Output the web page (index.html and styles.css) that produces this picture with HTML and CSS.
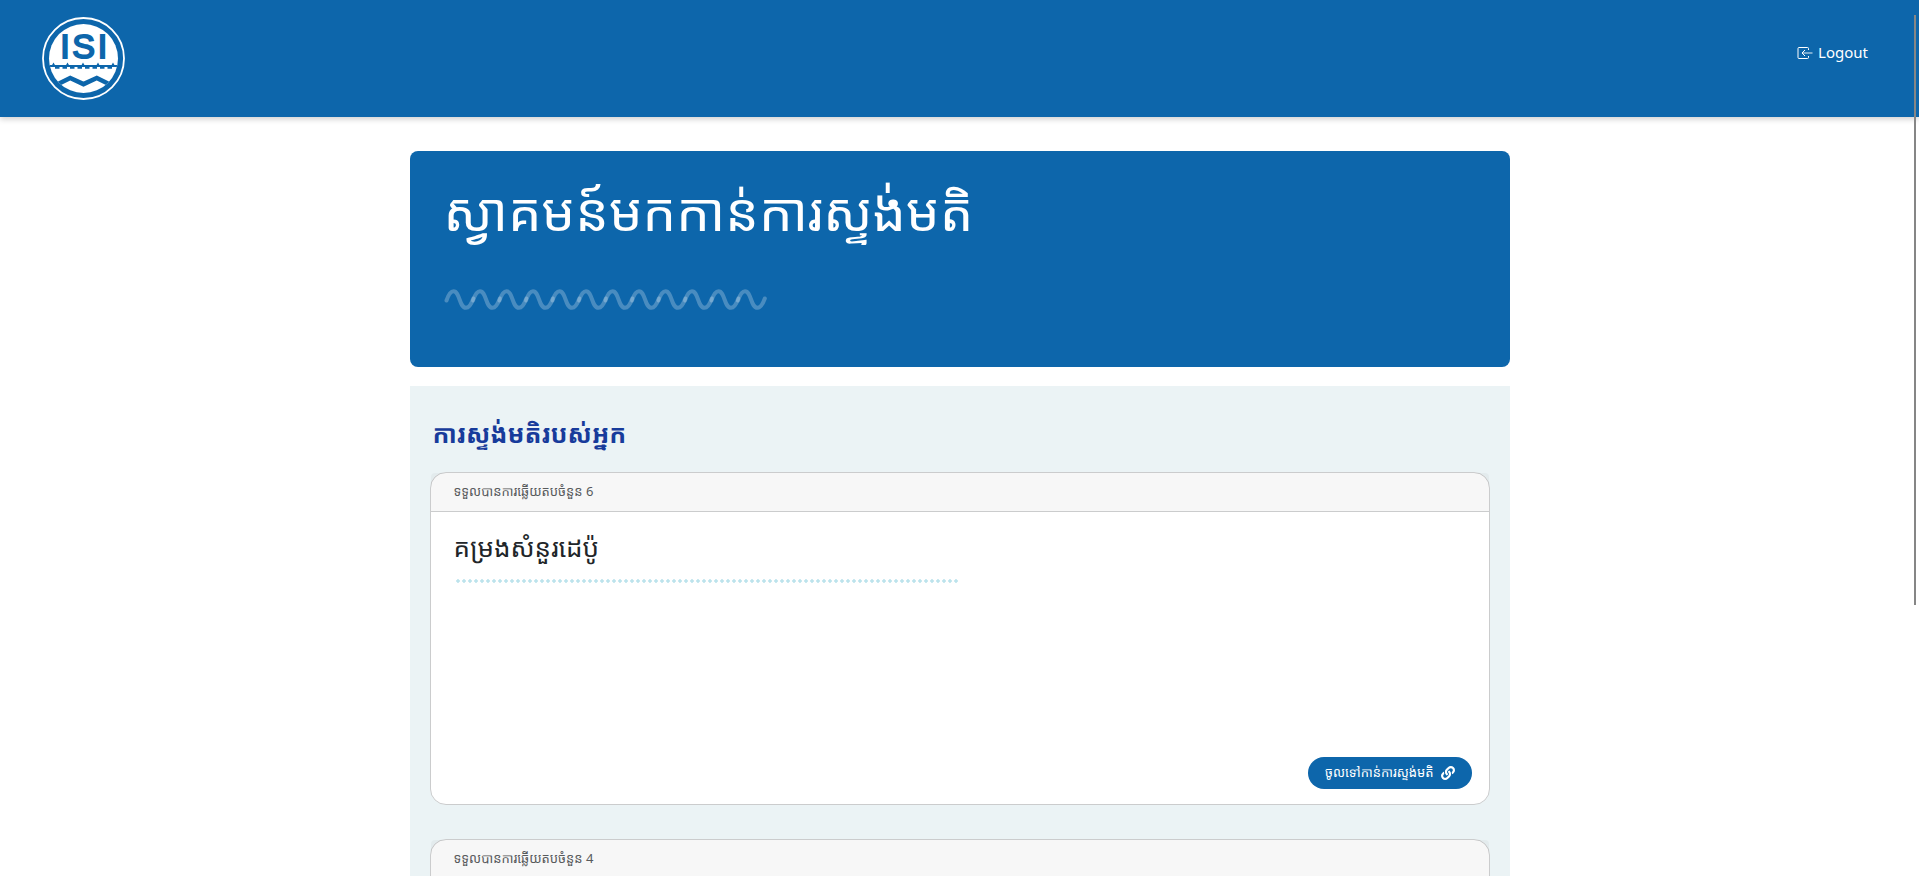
FILE: index.html
```html
<!DOCTYPE html>
<html lang="km">
<head>
<meta charset="utf-8">
<meta name="viewport" content="width=device-width, initial-scale=1">
<title>ISI</title>
<link rel="stylesheet" href="styles.css">
</head>
<body>
<header class="topbar">
  <a class="brand" href="#" aria-label="Home">
    <svg class="logo" viewBox="0 0 83 83" aria-hidden="true">
      <defs><clipPath id="disc"><circle cx="41.500" cy="41.500" r="34.500"/></clipPath></defs>
      <circle cx="41.500" cy="41.500" r="40.500" fill="none" stroke="#fff" stroke-width="1.800"/>
      <circle cx="41.500" cy="41.500" r="34.500" fill="#fff"/>
      <g clip-path="url(#disc)" fill="none" stroke="#0d66ab">
        <path stroke-width="2.200" d="M5 49H78"/>
        <path fill="#0d66ab" stroke="none" d="M9.500 49l2-3.500 2 3.500zM23.500 49l2-3.500 2 3.500zM39 49l2-3.500 2 3.500zM54 49l2-3.500 2 3.500zM69 49l2-3.500 2 3.500z"/>
        <path stroke-width="2.400" stroke-dasharray="4.500 3" d="M13 50.600H72"/>
        <path stroke-width="4.600" d="M9 70.500L28.200 61 41.500 67.200 54.800 61 74 70.500"/>
      </g>
      <g class="logo-text" text-anchor="middle"><text x="23" y="41">I</text><text x="41.500" y="41">S</text><text x="60.500" y="41">I</text></g>
    </svg>
  </a>
  <a class="logout" href="#">
    <svg class="logout-icon" viewBox="0 0 16 14" fill="none" stroke="#fff" aria-hidden="true">
      <path d="M11.500 4V2.500Q11.500 1.500 10.500 1.500H2Q1 1.500 1 2.500V11.500Q1 12.500 2 12.500H10.500Q11.500 12.500 11.500 11.500V10"/>
      <path d="M8 4L5 7l3 3"/><path d="M5.500 7H15.500" stroke-width="1.500" stroke-opacity=".6"/>
    </svg>
    <span>Logout</span>
  </a>
</header>
<main class="page">
  <section class="banner">
    <h1 class="banner-title">ស្វាគមន៍មកកាន់ការស្ទង់មតិ</h1>
    <svg class="wave" viewBox="0 0 324 22" aria-hidden="true">
      <defs><path id="w" d="M2.500 12.500C5 5 7 3.200 9.500 3.200C16 3.200 15 19.800 22 19.800C25 19.800 27 17 29.300 10.500"/></defs>
      <g fill="none" stroke="#fff" stroke-opacity=".25" stroke-width="4" stroke-linecap="round">
        <use href="#w"/><use href="#w" x="26.500"/><use href="#w" x="53"/><use href="#w" x="79.500"/><use href="#w" x="106"/><use href="#w" x="132.500"/><use href="#w" x="159"/><use href="#w" x="185.500"/><use href="#w" x="212"/><use href="#w" x="238.500"/><use href="#w" x="265"/><use href="#w" x="291.500"/>
      </g>
    </svg>
  </section>
  <section class="surveys">
    <h2 class="surveys-title">ការស្ទង់មតិរបស់អ្នក</h2>
    <article class="card">
      <div class="card-head">ទទួលបានការឆ្លើយតបចំនួន 6</div>
      <div class="card-body">
        <h3 class="card-title">គម្រងសំនួរដេប៉ូ</h3>
        <div class="dots"></div>
        <a class="button" href="#"><span>ចូលទៅកាន់ការស្ទង់មតិ</span>
          <svg class="link-icon" viewBox="0 0 512 512" fill="#fff" aria-hidden="true"><path d="M326.612 185.391c59.747 59.809 58.927 155.698.36 214.590-.110.120-.240.250-.360.370l-67.200 67.200c-59.270 59.270-155.699 59.262-214.960 0-59.270-59.260-59.270-155.700 0-214.960l37.106-37.106c9.840-9.840 26.786-3.300 27.294 10.606.648 17.722 3.826 35.527 9.690 52.721 1.986 5.822.567 12.262-3.783 16.612l-13.087 13.087c-28.026 28.026-28.905 73.660-1.155 101.960 28.024 28.579 74.086 28.749 102.325.510l67.200-67.190c28.191-28.191 28.073-73.757 0-101.830-3.701-3.694-7.429-6.564-10.341-8.569a16.037 16.037 0 0 1-6.947-12.606c-.396-10.567 3.348-21.456 11.698-29.806l21.054-21.055c5.521-5.521 14.182-6.199 20.584-1.731a152.482 152.482 0 0 1 20.522 17.197zM467.547 44.449c-59.261-59.262-155.690-59.270-214.960 0l-67.200 67.200c-.120.120-.250.250-.360.370-58.566 58.892-59.387 154.781.360 214.590a152.454 152.454 0 0 0 20.521 17.196c6.402 4.468 15.064 3.789 20.584-1.731l21.054-21.055c8.350-8.350 12.094-19.239 11.698-29.806a16.037 16.037 0 0 0-6.947-12.606c-2.912-2.005-6.640-4.875-10.341-8.569-28.073-28.073-28.191-73.639 0-101.830l67.200-67.190c28.239-28.239 74.300-28.069 102.325.510 27.750 28.300 26.872 73.934-1.155 101.960l-13.087 13.087c-4.350 4.350-5.769 10.790-3.783 16.612 5.864 17.194 9.042 34.999 9.690 52.721.509 13.906 17.454 20.446 27.294 10.606l37.106-37.106c59.271-59.259 59.271-155.699.001-214.959z"/></svg>
        </a>
      </div>
    </article>
    <article class="card">
      <div class="card-head">ទទួលបានការឆ្លើយតបចំនួន 4</div>
      <div class="card-body"></div>
    </article>
  </section>
</main>
<div class="scroll-thumb"></div>
</body>
</html>
```
FILE: styles.css
```css
* { box-sizing: border-box; }
body {
  margin: 0;
  height: 100vh;
  overflow: hidden;
  background: #fff;
  color: #212529;
  font-family: "Noto Sans", "Open Sans", "Noto Sans Khmer", sans-serif;
}
h1, h2, h3 { margin: 0; font-weight: 400; }
a { text-decoration: none; }
.topbar {
  display: flex;
  justify-content: space-between;
  height: 117px;
  padding: 17px 51px 0 42px;
  background: #0d66ab;
  box-shadow: 0 2px 6px rgba(0, 0, 0, .2);
}
.logo { display: block; width: 83px; height: 83px; }
.logo-text {
  font: 400 34px "Liberation Sans", Arial, sans-serif;
  fill: #0d66ab;
  stroke: #0d66ab;
  stroke-width: 2px;
}
.logout {
  display: flex;
  align-items: center;
  gap: 5px;
  height: 24px;
  margin-top: 24px;
  color: #fff;
  font-size: 15px;
}
.logout span { padding-bottom: 2px; }
.logout-icon { width: 16px; height: 14px; }
.page { max-width: 1100px; margin: 34px auto 0; }
.banner {
  height: 216px;
  padding: 24px 34px;
  border-radius: 8px;
  background: #0d66ab;
}
.banner-title { color: #fff; font-size: 53px; line-height: 72px; white-space: nowrap; }
.wave { display: block; width: 324px; height: 22px; margin-top: 41px; }
.surveys { margin-top: 19px; padding: 27px 20px 30px; background: #ebf3f5; }
.surveys-title {
  margin: 0 3px 19px;
  color: #173b9b;
  font-size: 25px;
  font-weight: 700;
  line-height: 40px;
}
.card {
  margin-bottom: 34px;
  border: 1px solid #cbcccd;
  border-radius: 16px;
  background: #fff;
}
.card-head {
  height: 39px;
  padding: 0 23px;
  border-bottom: 1px solid #cbcccd;
  border-radius: 4px 4px 0 0;
  background: rgba(0, 0, 0, .03);
  color: #585a5c;
  font-size: 13px;
  line-height: 36px;
}
.card-body {
  display: flex;
  flex-direction: column;
  min-height: 292px;
  padding: 15px 17px 15px 23px;
}
.card-title { font-size: 26px; line-height: 40px; }
.dots {
  width: 504px;
  max-width: 100%;
  height: 4px;
  margin: 12px 0 0 1px;
  background: radial-gradient(circle, #bce3ec 1px, rgba(188, 227, 236, .6) 2px, transparent 2px) 0 0 / 6px 4px;
}
.button {
  display: flex;
  align-items: center;
  align-self: flex-end;
  gap: 7px;
  height: 32px;
  margin-top: auto;
  padding: 0 17px;
  border-radius: 16px;
  background: #0d66ab;
  color: #fff;
  font-size: 13px;
  line-height: 24px;
}
.button span { padding-bottom: 3px; }
.link-icon { width: 14px; height: 14px; }
.scroll-thumb {
  position: fixed;
  top: 15px;
  right: 3px;
  width: 2px;
  height: 590px;
  background: #868686;
}
```
